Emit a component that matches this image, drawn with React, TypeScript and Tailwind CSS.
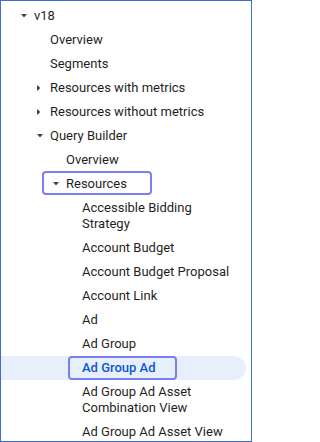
type Node = {
  label: string;
  level: 0 | 1 | 2 | 3;
  arrow?: 'down' | 'right';
  selected?: boolean;
  focus?: 'resources' | 'adgroupad';
};

const items: Node[] = [
  { label: 'v18', level: 0, arrow: 'down' },
  { label: 'Overview', level: 1 },
  { label: 'Segments', level: 1 },
  { label: 'Resources with metrics', level: 1, arrow: 'right' },
  { label: 'Resources without metrics', level: 1, arrow: 'right' },
  { label: 'Query Builder', level: 1, arrow: 'down' },
  { label: 'Overview', level: 2 },
  { label: 'Resources', level: 2, arrow: 'down', focus: 'resources' },
  { label: 'Accessible Bidding Strategy', level: 3 },
  { label: 'Account Budget', level: 3 },
  { label: 'Account Budget Proposal', level: 3 },
  { label: 'Account Link', level: 3 },
  { label: 'Ad', level: 3 },
  { label: 'Ad Group', level: 3 },
  { label: 'Ad Group Ad', level: 3, selected: true, focus: 'adgroupad' },
  { label: 'Ad Group Ad Asset Combination View', level: 3 },
  { label: 'Ad Group Ad Asset View', level: 3 },
];

// left padding of the arrow slot for each depth
const indent = ['pl-[20px]', 'pl-[36px]', 'pl-[52px]', 'pl-[68px]'];

const Arrow = ({ dir }: { dir?: 'down' | 'right' }) => {
  if (dir === 'down') {
    return (
      <svg width="7" height="4" viewBox="0 0 7 4" className="mt-[6px] fill-[#444746]">
        <polygon points="0,0 6,0 3,3.5" />
      </svg>
    );
  }
  if (dir === 'right') {
    return (
      <svg width="4" height="7" viewBox="0 0 4 7" className="mt-[5px] fill-[#444746]">
        <polygon points="0,0 3.5,3 0,6" />
      </svg>
    );
  }
  return null;
};

export default function App() {
  return (
    <div className="w-[252px] h-[442px] overflow-hidden border border-[#3d6fcf] bg-white pt-[3px] font-['Roboto',sans-serif] text-[13px] leading-4 text-[#1f1f1f]">
      <ul className="w-[245px]">
        {items.map((item, i) => (
          <li
            key={i}
            className={`relative flex py-1 pr-[10px] ${indent[item.level]} ${
              item.selected ? 'rounded-r-full bg-[#e8effc] font-medium text-[#0b57d0]' : ''
            }`}
          >
            <span className="w-[13px] shrink-0">
              <Arrow dir={item.arrow} />
            </span>
            <span>{item.label}</span>
            {item.focus === 'resources' && (
              <span className="absolute left-[41px] top-[-1px] h-6 w-[110px] rounded-[4px] border-2 border-[#7b7ff2]" />
            )}
            {item.focus === 'adgroupad' && (
              <span className="absolute left-[67px] top-0 h-6 w-[109px] rounded-[4px] border-2 border-[#7b7ff2]" />
            )}
          </li>
        ))}
      </ul>
    </div>
  );
}
